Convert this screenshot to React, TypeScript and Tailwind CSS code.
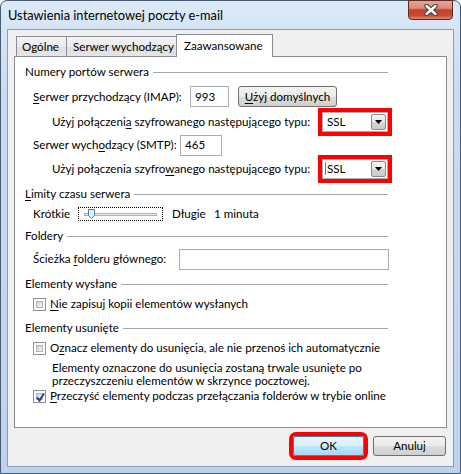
const FONT = "font-['Lato',sans-serif] text-[11.6px]";

function Acc({ children }: { children: string }) {
  return <span className="underline underline-offset-[2px]">{children}</span>;
}

function GroupHeader({ label }: { label: React.ReactNode }) {
  return (
    <div className="flex items-center h-[16px] w-[363px]">
      <span className="whitespace-nowrap">{label}</span>
      <div className="flex-1 h-px bg-[#a5a5a5] ml-[4px]" />
    </div>
  );
}

function TextBox({ value, className }: { value?: string; className: string }) {
  return (
    <div className={`h-[21px] shrink-0 border border-[#abadb3] bg-white flex items-center pl-[4px] ${className}`}>
      {value}
    </div>
  );
}

function SslSelect({ caret }: { caret?: boolean }) {
  return (
    <div className="w-[66px] h-[20px] shrink-0 border border-[#abadb3] bg-white ring-4 ring-[#ff0000] flex items-center pl-[4px] pr-[1px]">
      {caret && <span className="w-px h-[13px] bg-[#3b82f6] -ml-[2px] mr-[1px]" />}
      <span className="flex-1">SSL</span>
      <div className="w-[15px] h-[16px] border border-[#8a8a8a] rounded-[2px] bg-[linear-gradient(180deg,#f4f4f4_0%,#e6e6e6_50%,#d6d6d6_51%,#cdcdcd_100%)] flex items-center justify-center">
        <svg width="7" height="4" viewBox="0 0 7 4">
          <path d="M0 0H7L3.5 4Z" fill="#000" />
        </svg>
      </div>
    </div>
  );
}

function CheckBox({ checked }: { checked?: boolean }) {
  return (
    <div className="w-[13px] h-[13px] border border-[#8f8f8f] bg-white p-[2px] shrink-0">
      <div className="w-full h-full border border-[#aeb4bb] bg-[linear-gradient(135deg,#cbcfd5_0%,#f6f6f6_100%)] relative">
        {checked && (
          <svg className="absolute -left-[2px] -top-[2px]" width="11" height="11" viewBox="0 0 11 11">
            <path d="M2 5.5L4.5 8.5L9 1.5" stroke="#21468c" strokeWidth="2" fill="none" />
          </svg>
        )}
      </div>
    </div>
  );
}

function Button({ children, focused, className }: { children: React.ReactNode; focused?: boolean; className: string }) {
  return (
    <div
      className={`h-[20px] shrink-0 rounded-[3px] border flex items-center justify-center ${
        focused
          ? "border-[#3c7fb1] bg-[linear-gradient(180deg,#eaf6fd_0%,#d9f0fc_50%,#bee6fd_51%,#a7d9f5_100%)] ring-4 ring-[#ff0000]"
          : "border-[#707070] bg-[linear-gradient(180deg,#f2f2f2_0%,#ebebeb_50%,#dddddd_51%,#cfcfcf_100%)]"
      } ${className}`}
    >
      {children}
    </div>
  );
}

export default function App() {
  return (
    <div className={`w-[461px] h-[474px] overflow-hidden bg-white text-black whitespace-nowrap ${FONT}`}>
      <div className="w-full h-full rounded-t-[7px] border border-[#4a5a70] bg-[linear-gradient(180deg,#dce9f7_0%,#c7dbf2_20%,#bcd3ef_100%)] flex flex-col">
        <div className="h-[28px] flex items-start shrink-0">
          <span className="pl-[7px] pt-[7px] leading-[15px] text-[12.8px]">Ustawienia internetowej poczty e-mail</span>
          <div className="ml-auto mr-[7px] -mt-px w-[45px] h-[20px] rounded-b-[4px] border border-[#5b2a25] bg-[linear-gradient(180deg,#e8a597_0%,#d98a78_40%,#c6412a_50%,#c84a30_80%,#e08a6e_100%)] flex items-center justify-center">
            <svg width="14" height="12" viewBox="0 0 14 12">
              <path d="M2.5 2L11.5 10M11.5 2L2.5 10" stroke="#3d3d4a" strokeWidth="4.5" strokeLinecap="round" />
              <path d="M2.5 2L11.5 10M11.5 2L2.5 10" stroke="#ffffff" strokeWidth="2.4" strokeLinecap="round" />
            </svg>
          </div>
        </div>

        <div className="mx-[6px] h-[438px] border border-[#8d9db3] bg-[#f0f0f0] flex flex-col shrink-0">
          {/* tabs */}
          <div className="mt-[4px] ml-[8px] h-[22px] flex items-end">
            <div className="w-[51px] h-[20px] border border-b-0 border-[#898c95] bg-[linear-gradient(180deg,#f3f3f3_0%,#ebebeb_50%,#dedede_51%,#e5e5e5_100%)] pl-[5px] leading-[19px]">
              Ogólne
            </div>
            <div className="-ml-px w-[111px] h-[20px] border border-b-0 border-[#898c95] bg-[linear-gradient(180deg,#f3f3f3_0%,#ebebeb_50%,#dedede_51%,#e5e5e5_100%)] pl-[6px] leading-[19px]">
              Serwer wychodzący
            </div>
            <div className="-ml-px w-[97px] h-[23px] -mb-px relative z-10 border border-b-0 border-[#898c95] bg-white pl-[7px] leading-[21px]">
              Zaawansowane
            </div>
          </div>

          <div className="mx-[6px] h-[372px] border border-[#898c95] bg-white pl-[10px] pt-[7px]">
            <GroupHeader label="Numery portów serwera" />
            <div className="mt-[6px] h-[21px] flex items-center pl-[8px]">
              <span className="w-[157px] shrink-0">
                <Acc>S</Acc>erwer przychodzący (IMAP):
              </span>
              <TextBox value="993" className="w-[39px]" />
              <Button className="ml-[9px] w-[99px] h-[21px]">
                <span>
                  <Acc>U</Acc>żyj domyślnych
                </span>
              </Button>
            </div>
            <div className="mt-[1px] h-[27px] flex items-center pl-[27px]">
              <span className="w-[270px] shrink-0">
                Użyj połączeni<Acc>a</Acc> szyfrowanego następującego typu:
              </span>
              <SslSelect />
            </div>
            <div className="h-[20px] flex items-center pl-[8px]">
              <span className="w-[147px] shrink-0">
                Serwer wych<Acc>o</Acc>dzący (SMTP):
              </span>
              <TextBox value="465" className="w-[42px] h-[20px]" />
            </div>
            <div className="h-[27px] flex items-center pl-[27px]">
              <span className="w-[270px] shrink-0">
                Użyj połączenia szyfro<Acc>w</Acc>anego następującego typu:
              </span>
              <SslSelect caret />
            </div>

            <div className="mt-[4px]">
              <GroupHeader
                label={
                  <>
                    <Acc>L</Acc>imity czasu serwera
                  </>
                }
              />
            </div>
            <div className="mt-[5px] h-[14px] flex items-center pl-[8px]">
              <span className="w-[45px] shrink-0">Krótkie</span>
              <div className="w-[85px] h-[14px] shrink-0 border border-dotted border-black flex items-center px-[5px] relative">
                <div className="flex-1 h-[3px] border border-[#b0b0b0] bg-[#e7eaea]" />
                <svg className="absolute left-[9px] top-[1px]" width="7" height="10" viewBox="0 0 7 10">
                  <path d="M0.5 0.5H6.5V6.5L3.5 9.5L0.5 6.5Z" fill="#e6f2fb" stroke="#3c7fb1" />
                </svg>
              </div>
              <span className="ml-[9px] w-[42px] shrink-0">Długie</span>
              <span>1 minuta</span>
            </div>

            <div className="mt-[7px]">
              <GroupHeader label="Foldery" />
            </div>
            <div className="mt-[5px] h-[20px] flex items-center pl-[8px]">
              <span className="w-[146px] shrink-0">
                Ścieżka <Acc>f</Acc>olderu głównego:
              </span>
              <TextBox className="w-[210px] h-[20px]" />
            </div>

            <div className="mt-[7px]">
              <GroupHeader label="Elementy wysłane" />
            </div>
            <div className="mt-[5px] h-[14px] flex items-center pl-[8px] gap-[4px]">
              <CheckBox />
              <span>
                <Acc>N</Acc>ie zapisuj kopii elementów wysłanych
              </span>
            </div>

            <div className="mt-[9px]">
              <GroupHeader label="Elementy usunięte" />
            </div>
            <div className="mt-[5px] h-[14px] flex items-center pl-[8px] gap-[4px]">
              <CheckBox />
              <span>
                O<Acc>z</Acc>nacz elementy do usunięcia, ale nie przenoś ich automatycznie
              </span>
            </div>
            <div className="mt-[6px] pl-[27px] leading-[13px]">
              <div>Elementy oznaczone do usunięcia zostaną trwale usunięte po</div>
              <div>przeczyszczeniu elementów w skrzynce pocztowej.</div>
            </div>
            <div className="mt-[2px] h-[14px] flex items-center pl-[8px] gap-[4px]">
              <CheckBox checked />
              <span>
                <Acc>P</Acc>rzeczyść elementy podczas przełączania folderów w trybie online
              </span>
            </div>
          </div>

          <div className="mt-[8px] flex justify-end pr-[7px] gap-[9px]">
            <Button focused className="w-[71px]">
              OK
            </Button>
            <Button className="w-[73px]">Anuluj</Button>
          </div>
        </div>
      </div>
    </div>
  );
}
